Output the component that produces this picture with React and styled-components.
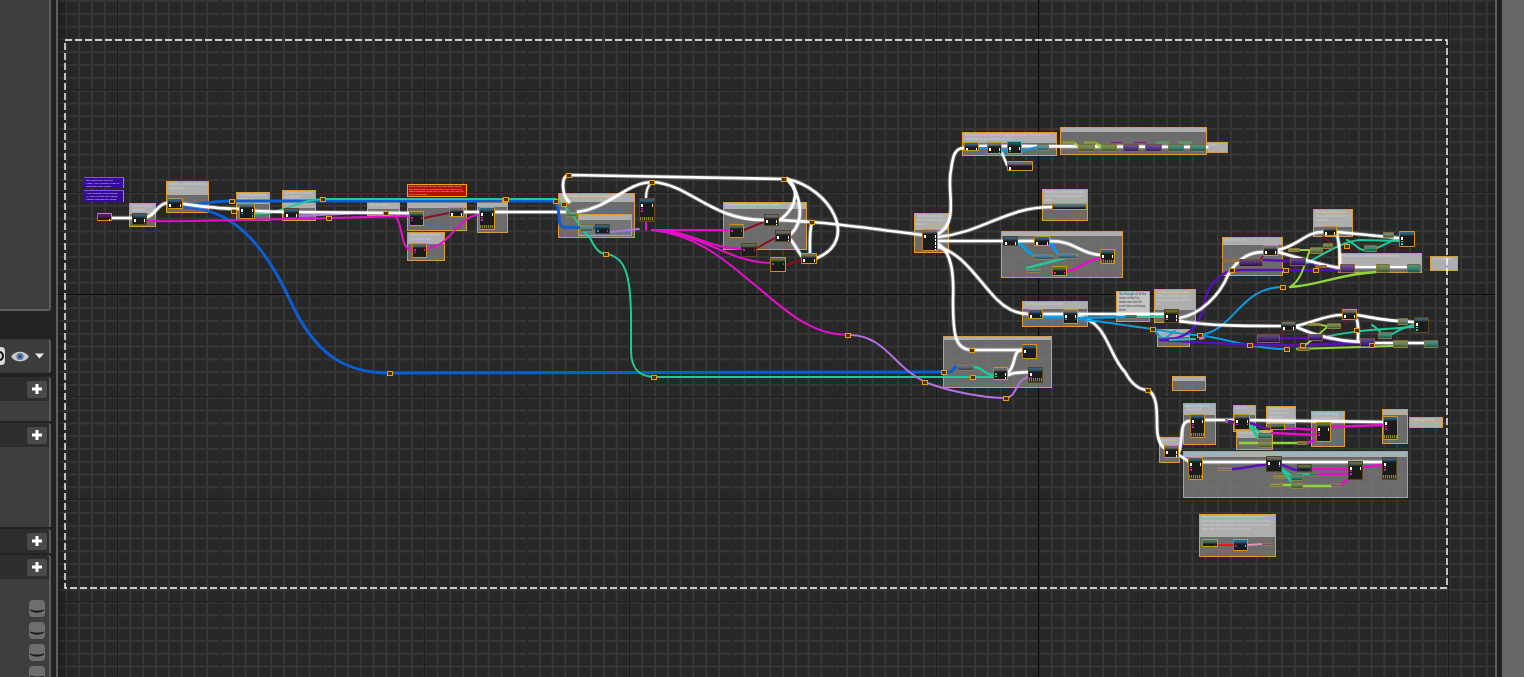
import React from "react";
import styled, { createGlobalStyle } from "styled-components";

const GlobalStyle = createGlobalStyle`
  html, body { margin: 0; padding: 0; height: 100%; overflow: hidden; background: #222; }
  #root { height: 100%; }
`;

const WHITE = "#ffffff";
const BLUE = "#0b5fd2";
const CYAN = "#0a9ce2";
const TEAL = "#1fc99a";
const GREEN = "#8fd63a";
const MAGENTA = "#e40fc8";
const PURPLE = "#5a10b8";
const LILAC = "#b272e0";
const RED = "#8a1020";

const HEADS = {
  blue: "#2f607f",
  green: "#56704e",
  gray: "#6b6b6b",
  purple: "#4c1a70",
  teal: "#10595e",
  yellow: "#6a6a1c",
};

// page coordinates: x1, y1, x2, y2, bottom of the header, text
const comments = [
  [129, 203, 156, 227, 213, "Draw the thing and hand back"],
  [166, 181, 209, 213, 194, "Find the current state of the output and keep it so that it can be read by other parts of the graph below"],
  [236, 192, 270, 221, 203, "Setup the values we need to use in the song"],
  [282, 190, 316, 221, 207, "Set the first value of the key here"],
  [367, 202, 400, 216, 208, "Get the name"],
  [407, 202, 467, 231, 207, "Loop through the notes and set"],
  [407, 232, 445, 261, 243, "Work out the note and get what is next in it"],
  [477, 202, 508, 233, 206, "Make the thing"],
  [558, 193, 635, 238, 201, "Loop through every part of the song and set values"],
  [578, 214, 632, 236, 219, "Get the part of the song"],
  [723, 202, 807, 250, 208, "Check each of the parts for what it holds"],
  [962, 132, 1057, 156, 142, "Set up the pattern with each thing that it needs. This runs at the start of the song each time, for each of the parts in it"],
  [1060, 127, 1207, 155, 131, "Make the strings"],
  [1207, 142, 1228, 153, 153, "Done"],
  [1042, 189, 1088, 221, 203, "Find the last thing and keep it so that it can be used by the parts below it in the graph"],
  [914, 213, 949, 253, 229, "Split into parts, one for each of the jobs it has to do here"],
  [1001, 231, 1123, 278, 235, "Work out the time for each part"],
  [1222, 237, 1283, 276, 244, "Set the first line"],
  [1313, 209, 1353, 237, 226, "Run the next line of the thing and check that it is valid here so that it works"],
  [1338, 253, 1422, 273, 264, "Print the line out and hand it to the next part"],
  [1430, 256, 1458, 271, 271, "Done with line"],
  [1022, 301, 1088, 327, 308, "Get the value out of the data"],
  [1154, 289, 1196, 323, 309, "Set the second line and hand it on so that every part can read the value of it"],
  [1157, 329, 1190, 347, 336, "Find the row and value"],
  [943, 336, 1052, 388, 339, "Check whether it is the last part and go on"],
  [1172, 376, 1206, 391, 380, "Notes"],
  [1183, 403, 1216, 445, 414, "Ahead of the rest, check all of the parts"],
  [1159, 437, 1180, 463, 445, "Branch it here"],
  [1233, 405, 1256, 432, 414, "Get the item"],
  [1236, 430, 1273, 450, 437, "Get the parts"],
  [1266, 406, 1296, 430, 423, "Build the list of items from the part above"],
  [1311, 411, 1345, 447, 422, "Check each thing that we have and hand them back here"],
  [1382, 409, 1408, 444, 414, "Set item"],
  [1409, 417, 1443, 428, 428, "Finish up the list"],
  [1183, 451, 1408, 498, 456, "Make the list of parts from the thing and set"],
  [1199, 514, 1276, 557, 536, "This part is not used while the song runs, but it is kept so that we are able to test each of the parts on their own. Run it from the editor to see what comes back and check the values in the log"],
];

const TEXT_NOTE = [1116, 291, 1150, 322, 315, "Go through all of the items in the list, make one line for each item and keep them in a row so that they can be looked up again later on when it comes to printing them out"];

const notes = [
  [84, 177, 124, 188, "Big output until have the [VEGA] key is made it easy to match for in the output"],
  [84, 190, 124, 202, "I also draw the socket things i.e. while see the way things outside and grab the things"],
];

const RED_NOTE = [407, 184, 467, 197, "This is to find where are are in the song string. Use the Blueprint to tracked each thing there is so easy to keep data generalized, so use here to find where are on so we don't repeat heads"];

const M = "#e40fc8";
const W = "#ffffff";
const C = "#19d3c0";
const B = "#11a0e8";

// full nodes: x1, y1, x2, y2, head, left pins, right pins, footer
const nodes = [
  [97, 213, 112, 221, "purple", [], [W]],
  [132, 213, 147, 225, "blue", [W], [W, M]],
  [167, 198, 183, 209, "blue", [W], [W, B]],
  [239, 203, 255, 219, "gray", [W, B], [W, B, C]],
  [284, 208, 299, 218, "blue", [W], [W, M]],
  [409, 211, 424, 226, "green", [M, M], [M]],
  [449, 207, 464, 217, "gray", [W], [W]],
  [412, 243, 427, 258, "green", [M, M], [M]],
  [479, 207, 495, 230, "blue", [W, M, M], [W], true],
  [595, 224, 610, 234, "blue", [B], [M]],
  [639, 198, 655, 222, "blue", [W, M, M], [W], true],
  [729, 224, 744, 238, "green", [M], [M]],
  [764, 214, 779, 226, "gray", [W], [W, W]],
  [775, 230, 791, 242, "gray", [W], [W, W]],
  [741, 243, 757, 257, "green", [M], [M]],
  [770, 257, 786, 272, "green", [M], [M]],
  [801, 253, 817, 264, "gray", [W], [W, W]],
  [964, 142, 979, 151, "blue", [W], [W, B]],
  [987, 142, 1002, 154, "gray", [W], [W, B]],
  [1007, 141, 1022, 154, "teal", [W, B], [W]],
  [1007, 161, 1033, 171, "gray", [W], []],
  [1052, 203, 1087, 210, "gray", [W], []],
  [922, 229, 938, 251, "gray", [W], [W, W, W, W, W]],
  [1003, 236, 1018, 246, "blue", [W], [W, B]],
  [1034, 236, 1050, 246, "blue", [W], [W, B]],
  [1100, 249, 1115, 264, "blue", [W, M], [W], true],
  [1052, 266, 1067, 276, "green", [M, M], [M]],
  [1028, 309, 1043, 319, "blue", [W], [B]],
  [1063, 309, 1078, 324, "gray", [W, B], [W, B]],
  [1164, 309, 1179, 323, "yellow", [W, C], [W, W]],
  [1022, 344, 1037, 359, "blue", [W], []],
  [993, 367, 1008, 380, "gray", [C, C], [W, W]],
  [1028, 367, 1043, 383, "blue", [W, M], [], true],
  [1263, 245, 1278, 256, "gray", [W], [W, W]],
  [1323, 226, 1337, 236, "gray", [W], [W, W]],
  [1399, 231, 1415, 247, "blue", [W, C, C], []],
  [1281, 321, 1296, 331, "gray", [W], [W, W]],
  [1342, 309, 1357, 320, "gray", [W], [W, W]],
  [1414, 317, 1429, 333, "blue", [W, C, C], []],
  [1190, 414, 1205, 438, "blue", [W, M, M], [W], true],
  [1164, 445, 1179, 458, "gray", [W], [W, W]],
  [1234, 414, 1250, 430, "gray", [W, M], [W, C]],
  [1270, 423, 1285, 430, "green", [], [M]],
  [1316, 422, 1331, 442, "green", [W, M, M], [W]],
  [1383, 416, 1398, 440, "blue", [W, M, M], [], true],
  [1188, 457, 1203, 480, "blue", [W, M, M], [W], true],
  [1266, 456, 1282, 472, "gray", [W, PURPLE], [W, C]],
  [1297, 464, 1312, 472, "green", [PURPLE], [M]],
  [1348, 461, 1363, 480, "green", [W, M, M], [W]],
  [1382, 457, 1397, 480, "blue", [W, M, M], [], true],
  [1202, 539, 1218, 547, "green", [], ["#e01010"]],
  [1233, 539, 1248, 551, "blue", ["#e01010"], ["#e090b0"]],
];

// small value nodes: x1, y1, x2, y2, tint
const pures = [
  [566, 211, 577, 217, "#3f8f78"],
  [580, 224, 593, 232, "#4a7a80"],
  [1037, 144, 1049, 151, "#3f7f90"],
  [1078, 144, 1095, 152, "#5f7a40"],
  [1101, 144, 1117, 152, "#5f7a40"],
  [1123, 144, 1139, 152, "#4a2a80"],
  [1145, 144, 1162, 152, "#4a2a80"],
  [1168, 144, 1184, 152, "#2a7a68"],
  [1190, 144, 1206, 152, "#2a7a68"],
  [1062, 141, 1075, 144, "#70a030"],
  [1084, 141, 1097, 144, "#70a030"],
  [1110, 141, 1123, 144, "#5a10b8"],
  [1133, 141, 1147, 144, "#5a10b8"],
  [1156, 141, 1169, 144, "#1fa080"],
  [1178, 141, 1192, 144, "#1fa080"],
  [1034, 253, 1053, 260, "#3f6f90"],
  [1058, 252, 1077, 259, "#3f6f90"],
  [1027, 268, 1041, 273, "#3f8f78"],
  [957, 363, 974, 371, "#55606a"],
  [1125, 315, 1137, 319, "#1a6a78"],
  [1239, 259, 1263, 267, "#3a1a5e"],
  [1222, 259, 1239, 262, "#8a5a3a"],
  [1383, 232, 1394, 238, "#5a7a60"],
  [1364, 245, 1377, 252, "#2a7a68"],
  [1310, 247, 1323, 254, "#5f7a40"],
  [1323, 243, 1333, 249, "#5f7a40"],
  [1288, 248, 1300, 252, "#7a9030"],
  [1290, 258, 1306, 266, "#3a1a7e"],
  [1315, 265, 1327, 268, "#7a5a30"],
  [1340, 264, 1355, 273, "#4a2a80"],
  [1376, 264, 1390, 273, "#5f7a40"],
  [1407, 264, 1420, 273, "#2a7a68"],
  [1398, 318, 1408, 325, "#5a7a60"],
  [1378, 332, 1392, 339, "#2a7a68"],
  [1360, 338, 1375, 347, "#3a1a7e"],
  [1393, 340, 1408, 348, "#5f7a40"],
  [1424, 340, 1438, 348, "#2a7a68"],
  [1257, 334, 1280, 343, "#3a1a5e"],
  [1308, 334, 1323, 341, "#3a1a7e"],
  [1327, 323, 1341, 329, "#5f7a40"],
  [1308, 323, 1321, 326, "#7a9030"],
  [1297, 347, 1310, 351, "#7a6a30"],
  [1258, 433, 1272, 439, "#2a7a68"],
  [1258, 441, 1272, 448, "#5f7a40"],
  [1291, 474, 1303, 481, "#2a7a68"],
  [1291, 482, 1303, 489, "#5f7a40"],
  [1309, 472, 1318, 476, "#2a7a68"],
  [1331, 483, 1341, 487, "#7a5a80"],
  [1218, 467, 1232, 471, "#8a6a90"],
  [1273, 475, 1286, 479, "#7a9030"],
  [1270, 483, 1283, 487, "#7a9030"],
  [1225, 419, 1228, 423, "#8a6a90"],
  [1297, 441, 1307, 445, "#7a6a30"],
  [1262, 542, 1272, 546, "#7a5a70"],
];

const reroutes = [
  [232, 201], [234, 211], [323, 199], [329, 218], [386, 213], [505, 200], [506, 199],
  [556, 201], [569, 175], [564, 204], [652, 182], [784, 179], [812, 222], [606, 254],
  [654, 377], [848, 335], [390, 373], [925, 382], [972, 350], [973, 377], [1006, 398],
  [1148, 390], [944, 372], [1153, 329], [1200, 335], [1250, 345], [1303, 345], [1232, 270],
  [1286, 270], [1316, 270], [1357, 330], [1372, 345], [1283, 287], [1287, 349], [1347, 246],
];

const wires = [
  // left half, long lines first
  [BLUE, 3, "M183 207 C230 208 262 240 290 300 C315 355 345 373 390 373 L945 372"],
  [BLUE, 3, "M183 206 C200 204 215 201 232 201 L556 201"],
  [TEAL, 2, "M255 214 C285 214 295 200 323 199 L556 199"],
  [MAGENTA, 2, "M147 221 C200 222 280 219 330 218 L409 216"],
  [LILAC, 2, "M299 216 C330 215 350 213 367 213 L409 214"],
  [MAGENTA, 2, "M390 213 C405 216 398 250 412 250"],
  [MAGENTA, 2, "M427 248 C450 248 458 215 479 215"],
  [RED, 2, "M424 218 L449 213"],
  [WHITE, 3, "M112 218 L132 218"],
  [WHITE, 3, "M147 217 C155 216 158 203 167 203"],
  [WHITE, 3, "M183 204 C200 206 220 209 239 209"],
  [WHITE, 3, "M255 211 L284 212 L409 213"],
  [WHITE, 3, "M464 212 L479 212"],
  [WHITE, 3, "M495 212 L566 212"],
  // middle
  [BLUE, 3, "M555 202 C562 210 556 225 563 227 L595 228"],
  [TEAL, 2, "M558 200 C575 215 582 230 590 238 C596 250 600 254 606 254 C625 256 631 275 631 320 L631 350 C631 370 640 377 655 377 L993 377"],
  [LILAC, 2, "M610 232 L639 229"],
  [MAGENTA, 2, "M646 222 L646 230"],
  [MAGENTA, 2, "M652 230 L729 230"],
  [MAGENTA, 2, "M652 230 C690 230 710 249 741 249"],
  [MAGENTA, 2, "M652 230 C700 232 730 263 770 263"],
  [MAGENTA, 2, "M652 230 C700 235 730 265 755 285 C785 310 810 335 848 335"],
  [LILAC, 2, "M851 335 C885 336 895 368 925 382 C950 392 985 398 1006 398 C1018 396 1015 380 1028 377"],
  [RED, 2, "M744 230 L764 222"],
  [RED, 2, "M757 248 L775 238"],
  [RED, 2, "M786 265 L801 260"],
  [WHITE, 3, "M569 202 C562 195 560 176 569 175 L784 179"],
  [WHITE, 3, "M787 179 C798 185 800 205 780 220"],
  [WHITE, 3, "M787 179 C802 195 805 222 790 235"],
  [WHITE, 3, "M787 179 C830 188 860 240 817 258"],
  [WHITE, 3, "M577 212 C610 208 625 183 652 182 C690 184 710 220 764 220"],
  [WHITE, 2.5, "M652 182 C647 186 646 192 646 198"],
  [WHITE, 3, "M779 220 L812 222 C830 223 860 227 922 235"],
  [WHITE, 3, "M812 222 C809 232 810 248 810 254"],
  [WHITE, 3, "M791 240 C796 246 798 252 803 258"],
  // fan out of the sequence node
  [WHITE, 3, "M938 234 C960 222 946 190 951 170 C953 155 955 148 964 148"],
  [WHITE, 3, "M938 237 C985 232 1005 207 1052 207"],
  [WHITE, 3, "M938 241 L1003 241"],
  [WHITE, 3, "M938 244 C952 252 954 275 953 300 C953 335 955 350 972 350 L1022 350"],
  [WHITE, 3, "M938 247 C960 252 975 275 990 292 C1003 308 1015 314 1028 314"],
  // top row
  [WHITE, 3, "M979 146 L1207 147"],
  [CYAN, 2, "M979 148 L987 148"],
  [CYAN, 2, "M1002 150 L1007 150"],
  [CYAN, 2, "M1022 151 L1037 147"],
  [GREEN, 2.5, "M1073 142 L1082 149"],
  [GREEN, 2.5, "M1095 142 L1103 149"],
  [WHITE, 2.5, "M1002 153 L1007 165"],
  // time group
  [CYAN, 3, "M1018 243 C1024 247 1030 255 1036 256"],
  [CYAN, 3, "M1050 243 C1055 246 1056 255 1060 256"],
  [WHITE, 3, "M1018 241 L1034 241"],
  [WHITE, 3, "M1050 241 C1075 241 1080 254 1100 255"],
  [TEAL, 2.5, "M1027 268 L1077 255"],
  [MAGENTA, 2.5, "M1067 271 C1080 270 1085 260 1100 258"],
  // blue + white from the get node
  [CYAN, 3.5, "M1043 317 L1063 317"],
  [WHITE, 3, "M1043 314 L1164 314"],
  [WHITE, 3, "M1078 316 C1108 322 1108 355 1125 372 C1132 385 1140 390 1148 390 C1157 395 1157 410 1157 425 C1157 438 1160 445 1164 448"],
  [TEAL, 2, "M1137 317 L1164 317"],
  [CYAN, 2.5, "M1078 318 L1125 317"],
  [CYAN, 2, "M1078 319 C1105 322 1130 326 1153 329 C1170 332 1185 335 1200 335 C1235 330 1240 287 1283 287"],
  [CYAN, 2, "M1153 329 L1163 340 L1175 331"],
  [CYAN, 2, "M1200 335 C1230 340 1255 349 1287 349"],
  [PURPLE, 2.5, "M1160 340 C1190 340 1198 325 1203 310 C1206 285 1220 270 1240 270 L1340 270"],
  [PURPLE, 2.5, "M1160 340 C1200 342 1240 346 1303 345 L1360 343"],
  [PURPLE, 2.5, "M1263 260 L1290 261"],
  [PURPLE, 2.5, "M1306 262 C1320 264 1330 267 1340 267"],
  [PURPLE, 2.5, "M1280 338 L1308 338"],
  [PURPLE, 2.5, "M1323 338 C1335 341 1345 342 1360 342"],
  [GREEN, 2.5, "M1290 287 C1320 285 1340 274 1376 272"],
  [GREEN, 2, "M1290 287 C1302 280 1305 262 1310 250"],
  [GREEN, 2, "M1297 349 L1393 346"],
  [GREEN, 2, "M1297 349 C1310 345 1322 330 1330 325"],
  [GREEN, 2, "M1300 250 L1310 250"],
  [GREEN, 2, "M1321 325 L1327 326"],
  [TEAL, 2, "M1307 263 C1330 250 1345 241 1360 240 L1399 241"],
  [TEAL, 2, "M1347 240 C1355 243 1358 250 1364 250"],
  [TEAL, 2, "M1377 248 C1385 245 1390 241 1399 238"],
  [TEAL, 2, "M1320 338 C1345 332 1365 330 1414 327"],
  [TEAL, 2, "M1372 325 C1378 328 1380 333 1384 335"],
  [TEAL, 2, "M1392 334 C1400 330 1405 326 1414 325"],
  [RED, 1.5, "M1323 236 L1332 244"],
  [RED, 1.5, "M1263 256 L1258 262"],
  [RED, 1.5, "M1284 331 L1278 336"],
  [RED, 1.5, "M1347 320 L1346 324"],
  [WHITE, 3, "M1179 318 C1200 315 1220 295 1228 275 C1238 258 1250 252 1263 252"],
  [WHITE, 3, "M1278 250 C1300 245 1305 232 1323 232"],
  [WHITE, 3, "M1337 232 L1399 238"],
  [WHITE, 3, "M1337 235 C1340 245 1340 255 1340 267"],
  [WHITE, 3, "M1278 252 C1300 258 1320 265 1340 268"],
  [WHITE, 3, "M1355 267 L1407 267"],
  [WHITE, 3, "M1179 321 C1210 326 1245 326 1281 326"],
  [WHITE, 3, "M1296 326 C1315 322 1325 315 1342 315"],
  [WHITE, 3, "M1357 315 C1375 318 1385 321 1414 322"],
  [WHITE, 3, "M1357 320 C1359 328 1358 333 1358 340"],
  [WHITE, 3, "M1296 327 C1320 338 1340 341 1360 342"],
  [WHITE, 3, "M1375 343 L1424 343"],
  [LILAC, 2, "M1200 339 L1204 338"],
  [TEAL, 2, "M1170 340 L1195 339"],
  // left lower groups
  [BLUE, 3, "M945 372 L950 372 C955 371 952 367 957 367"],
  [TEAL, 2.5, "M974 367 C982 367 985 375 993 375"],
  [WHITE, 3, "M1008 372 C1016 368 1012 350 1022 350"],
  [WHITE, 3, "M1008 375 L1014 373 L1028 372"],
  // bottom group
  [WHITE, 3, "M1179 452 C1184 440 1178 421 1190 421"],
  [WHITE, 3, "M1205 420 L1234 420 L1383 422"],
  [WHITE, 3, "M1179 455 L1188 461"],
  [WHITE, 3, "M1203 462 L1382 462"],
  [PURPLE, 2.5, "M1228 421 L1234 422"],
  [PURPLE, 2.5, "M1250 423 C1262 426 1262 429 1270 429"],
  [PURPLE, 2.5, "M1232 469 C1245 469 1250 465 1266 465"],
  [PURPLE, 2.5, "M1282 465 C1288 466 1290 470 1297 470"],
  [MAGENTA, 2.5, "M1285 428 L1316 430"],
  [MAGENTA, 2.5, "M1272 433 L1316 435"],
  [MAGENTA, 2.5, "M1331 427 L1383 425"],
  [MAGENTA, 2.5, "M1307 443 L1316 440"],
  [MAGENTA, 2.5, "M1312 469 L1348 469"],
  [MAGENTA, 2.5, "M1318 474 L1348 474"],
  [MAGENTA, 2.5, "M1341 485 L1348 479"],
  [MAGENTA, 2.5, "M1363 467 L1382 465"],
  [GREEN, 2.5, "M1240 443 L1258 443"],
  [GREEN, 2.5, "M1272 443 L1297 443"],
  [GREEN, 2.5, "M1283 485 L1291 485"],
  [GREEN, 2.5, "M1303 486 L1331 486"],
  [TEAL, 3, "M1250 426 L1258 438"],
  [TEAL, 2, "M1252 426 L1262 434"],
  [TEAL, 3, "M1281 468 L1291 481"],
  [TEAL, 2, "M1283 470 L1291 475 L1309 474"],
  ["#e81818", 2, "M1218 545 L1233 545"],
  ["#e090b0", 2, "M1248 545 L1262 544"],
];

// keep a note to what its box can hold at 3px, cut at a word
const fitText = (text, width, height) => {
  const lines = Math.floor(height / 4);
  const room = Math.floor((width - 4) / 1.7) * lines;
  if (text.length <= room) return text;
  return text.slice(0, room).replace(/\s+\S*$/, "");
};

const Page = styled.div`
  display: flex;
  width: 1524px;
  height: 677px;
  overflow: hidden;
  background: #222;
`;

const LeftColumn = styled.aside`
  display: flex;
  flex-direction: column;
  width: 51px;
  height: 677px;
  flex-shrink: 0;
`;

const TopPanel = styled.div`
  height: 309px;
  flex-shrink: 0;
  background: #3e3e3e;
  border-right: 2px solid #5c5c5c;
  border-bottom: 2px solid #5c5c5c;
  border-bottom-right-radius: 3px;
`;

const Toolbar = styled.div`
  display: flex;
  align-items: center;
  gap: 6px;
  height: 34px;
  margin-top: 28px;
  margin-bottom: 4px;
  flex-shrink: 0;
  background: #3c3c3c;
  border-right: 2px solid #5c5c5c;
  border-radius: 0 3px 3px 0;
`;

const ToggleStub = styled.div`
  width: 5px;
  height: 18px;
  background: #d8d8d8;
  border-radius: 0 4px 4px 0;
  position: relative;
  &::after {
    content: "";
    position: absolute;
    left: -5px;
    top: 4px;
    width: 5px;
    height: 6px;
    border: 2px solid #111;
    border-radius: 50%;
  }
`;

const Section = styled.section`
  flex-shrink: 0;
  border-right: 2px solid #5c5c5c;
  margin-bottom: 2px;
  background: #3e3e3e;
  border-top-right-radius: 3px;
`;

const SectionHead = styled.div`
  display: flex;
  align-items: center;
  justify-content: flex-end;
  height: ${(p) => p.$h}px;
  padding-right: 2px;
  background: #2d2d2d;
  border-top-right-radius: 3px;
`;

const SectionBody = styled.div`
  display: flex;
  flex-direction: column;
  align-items: flex-end;
  gap: 5px;
  height: ${(p) => p.$h}px;
  padding: ${(p) => (p.$list ? "21px 4px 0 0" : "0")};
  box-sizing: border-box;
  background: #3e3e3e;
`;

const AddButton = styled.div`
  display: flex;
  align-items: center;
  justify-content: center;
  width: 20px;
  height: 17px;
  color: #fff;
  background: #4a4a4a;
  border-radius: 2px;
`;

const ChevronButton = styled.div`
  display: flex;
  align-items: flex-end;
  justify-content: center;
  width: 16px;
  height: 17px;
  padding-bottom: 3px;
  box-sizing: border-box;
  flex-shrink: 0;
  background: #6e6e6e;
  border-radius: 4px;
`;

const CenterGap = styled.div`
  width: 5px;
  flex-shrink: 0;
  background: #222;
`;

const SideLine = styled.div`
  width: 2px;
  flex-shrink: 0;
  background: #5e5e5e;
`;

const RightPanel = styled.aside`
  flex: 1;
  background: #666;
`;

const Canvas = styled.main`
  position: relative;
  width: 1437px;
  height: 677px;
  flex-shrink: 0;
  overflow: hidden;
  background-color: #272727;
  background-image:
    linear-gradient(90deg, #1a1a1a 1px, transparent 1px),
    linear-gradient(#1a1a1a 1px, transparent 1px),
    linear-gradient(90deg, #373737 1.5px, transparent 1.5px),
    linear-gradient(#373737 1.5px, transparent 1.5px);
  background-size: 102.4px 100%, 100% 102.4px, 12.8px 100%, 100% 12.8px;
  background-position: 59px 0, 0 -13px, 7.4px 0, 0 12.9px;
`;

const MajorV = styled.div`
  position: absolute;
  left: 980px;
  top: 0;
  width: 1px;
  height: 100%;
  background: #080808;
`;

const MajorH = styled.div`
  position: absolute;
  left: 0;
  top: 294px;
  width: 100%;
  height: 1px;
  background: #080808;
`;

const Vignette = styled.div`
  position: absolute;
  inset: 0;
  background: linear-gradient(90deg, rgba(0, 0, 0, 0.25), rgba(0, 0, 0, 0) 16px, rgba(0, 0, 0, 0) 1420px, rgba(0, 0, 0, 0.15));
`;

const place = (p) => `
  left: ${p.$x1 - 58}px;
  top: ${p.$y1}px;
  width: ${p.$x2 - p.$x1}px;
  height: ${p.$y2 - p.$y1}px;
`;

const CommentBox = styled.div`
  position: absolute;
  ${place}
  display: flex;
  flex-direction: column;
  box-sizing: border-box;
  overflow: hidden;
  border: 1px solid #de9a3a;
  background: rgba(120, 120, 120, 0.85);
`;

const CommentHead = styled.div`
  height: ${(p) => p.$h}px;
  flex-shrink: 0;
  overflow: hidden;
  padding: 0 2px;
  box-sizing: border-box;
  background: ${(p) => (p.$dense ? "#c4c4c4" : "#aeaeae")};
  color: ${(p) => (p.$dense ? "#333" : "#d0d0d0")};
  font: 3px/4px "Liberation Sans", sans-serif;
`;

const NoteBox = styled.div`
  position: absolute;
  ${place}
  box-sizing: border-box;
  overflow: hidden;
  padding: 1px 2px;
  color: #e0dcf6;
  background: #340c98;
  border-top: 1px solid #8a50d8;
  border-right: 1px solid #a070e0;
  font: 2.5px/3.2px "Liberation Sans", sans-serif;
`;

const AlertBox = styled(NoteBox)`
  padding: 0 1px;
  color: #f4d8b8;
  background: #b01208;
  border: 1px solid #f0a010;
  line-height: 2.7px;
  font-size: 2.2px;
`;

const Node = styled.div`
  position: absolute;
  ${place}
  display: flex;
  flex-direction: column;
  box-sizing: border-box;
  overflow: hidden;
  background: #1a1c1c;
  border: 1px solid ${(p) => (p.$sel ? "#d8921a" : "#5c4420")};
  border-left-color: ${(p) => (p.$sel ? "#a8761e" : "#4a3a20")};
  border-radius: 1px;
`;

const NodeHead = styled.div`
  height: 4px;
  flex-shrink: 0;
  background: linear-gradient(${(p) => p.$c}, ${(p) => p.$c} 45%, #1f2222);
`;

const NodeBody = styled.div`
  display: flex;
  flex: 1;
  justify-content: space-between;
  padding: 1px 1px 0;
`;

const PinColumn = styled.div`
  display: flex;
  flex-direction: column;
  gap: 1px;
`;

const Pin = styled.i`
  display: block;
  width: 1.5px;
  height: ${(p) => (p.$exec ? 2.5 : 1.5)}px;
  background: ${(p) => p.$c};
`;

const NodeFoot = styled.div`
  height: 3px;
  flex-shrink: 0;
  background: repeating-linear-gradient(90deg, #8a8a28 0 1px, #2a2a20 1px 2px);
  border-bottom: 1px solid #3a3a18;
`;

const Pure = styled.div`
  position: absolute;
  ${place}
  box-sizing: border-box;
  background:
    linear-gradient(rgba(190, 190, 190, 0.3), rgba(190, 190, 190, 0.12) 50%, rgba(0, 0, 0, 0.3)),
    ${(p) => p.$c};
  border: 1px solid rgba(170, 120, 40, 0.55);
  border-radius: 1px;
`;

const Reroute = styled.div`
  position: absolute;
  left: ${(p) => p.$x - 58 - 3}px;
  top: ${(p) => p.$y - 2}px;
  width: 6px;
  height: 5px;
  box-sizing: border-box;
  background: #4a3418;
  border: 1px solid #e89c14;
`;

const Overlay = styled.svg`
  position: absolute;
  left: 0;
  top: 0;
  pointer-events: none;
`;

const Wire = styled.path`
  fill: none;
  stroke: ${(p) => p.$c};
  stroke-width: ${(p) => p.$w};
  stroke-linecap: round;
`;

const WireGlow = styled(Wire)`
  stroke-opacity: 0.28;
  stroke-width: ${(p) => p.$w + 1.5}px;
`;

const Marquee = styled.rect`
  fill: none;
  stroke: #fff;
  stroke-width: 1.4;
  stroke-dasharray: 7 3;
`;

function Plus() {
  return (
    <svg width="12" height="12" viewBox="0 0 12 12">
      <path d="M6 1v10M1 6h10" stroke="currentColor" strokeWidth="3" />
    </svg>
  );
}

function Chevron() {
  return (
    <svg width="14" height="5" viewBox="0 0 14 5">
      <path d="M0 1 C4 4 10 4 14 1 C10 2.4 4 2.4 0 1Z" fill="#141414" stroke="#141414" strokeWidth="0.7" />
    </svg>
  );
}

function Eye() {
  return (
    <svg width="18" height="11" viewBox="0 0 18 11">
      <path d="M0 5.5 C4 -1 14 -1 18 5.5 C14 12 4 12 0 5.5Z" fill="#c9c9c9" />
      <circle cx="9" cy="5.5" r="3.6" fill="#5b78ad" />
      <circle cx="9" cy="5.5" r="1.5" fill="#2d3f66" />
    </svg>
  );
}

function Caret() {
  return (
    <svg width="9" height="6" viewBox="0 0 9 6">
      <path d="M0 0.5h9L4.5 5.5Z" fill="#eee" />
    </svg>
  );
}

function Comment({ box, dense }) {
  const [x1, y1, x2, y2, head, text] = box;
  return (
    <CommentBox $x1={x1} $y1={y1} $x2={x2} $y2={y2}>
      <CommentHead $h={head - y1} $dense={dense}>{fitText(text, x2 - x1, head - y1 - 2)}</CommentHead>
    </CommentBox>
  );
}

function GraphNode({ data }) {
  const [x1, y1, x2, y2, head, left, right, foot] = data;
  const selected = (x1 * 7 + y1) % 3 !== 0;
  return (
    <Node $x1={x1} $y1={y1} $x2={x2} $y2={y2} $sel={selected}>
      <NodeHead $c={HEADS[head]} />
      <NodeBody>
        <PinColumn>
          {left.map((c, i) => <Pin key={i} $c={c} $exec={c === W && i === 0} />)}
        </PinColumn>
        <PinColumn>
          {right.map((c, i) => <Pin key={i} $c={c} $exec={c === W} />)}
        </PinColumn>
      </NodeBody>
      {foot && <NodeFoot />}
    </Node>
  );
}

export default function App() {
  return (
    <Page>
      <GlobalStyle />
      <LeftColumn>
        <TopPanel />
        <Toolbar>
          <ToggleStub />
          <Eye />
          <Caret />
        </Toolbar>
        <Section>
          <SectionHead $h={24}><AddButton><Plus /></AddButton></SectionHead>
          <SectionBody $h={20} />
        </Section>
        <Section>
          <SectionHead $h={24}><AddButton><Plus /></AddButton></SectionHead>
          <SectionBody $h={80} />
        </Section>
        <Section>
          <SectionHead $h={24}><AddButton><Plus /></AddButton></SectionHead>
        </Section>
        <Section>
          <SectionHead $h={24}><AddButton><Plus /></AddButton></SectionHead>
          <SectionBody $h={100} $list>
            <ChevronButton><Chevron /></ChevronButton>
            <ChevronButton><Chevron /></ChevronButton>
            <ChevronButton><Chevron /></ChevronButton>
            <ChevronButton><Chevron /></ChevronButton>
          </SectionBody>
        </Section>
      </LeftColumn>
      <CenterGap />
      <SideLine />
      <Canvas>
        <MajorV />
        <MajorH />
        <Vignette />
        {comments.map((box, i) => <Comment key={i} box={box} />)}
        <Comment box={TEXT_NOTE} dense />
        {notes.map(([x1, y1, x2, y2, text], i) => (
          <NoteBox key={i} $x1={x1} $y1={y1} $x2={x2} $y2={y2}>{text}</NoteBox>
        ))}
        <AlertBox $x1={RED_NOTE[0]} $y1={RED_NOTE[1]} $x2={RED_NOTE[2]} $y2={RED_NOTE[3]}>{RED_NOTE[4]}</AlertBox>
        <Overlay width="1437" height="677" viewBox="58 0 1437 677">
          {wires.map(([c, w, d], i) => (
            <g key={i}>
              {c === WHITE && <WireGlow $c={c} $w={w} d={d} />}
              <Wire $c={c} $w={c === WHITE ? w - 0.4 : w} d={d} />
            </g>
          ))}
        </Overlay>
        {nodes.map((data, i) => <GraphNode key={i} data={data} />)}
        {pures.map(([x1, y1, x2, y2, c], i) => (
          <Pure key={i} $x1={x1} $y1={y1} $x2={x2} $y2={y2} $c={c} />
        ))}
        {reroutes.map(([x, y], i) => <Reroute key={i} $x={x} $y={y} />)}
        <Overlay width="1437" height="677" viewBox="58 0 1437 677">
          <Marquee x="65" y="40" width="1382" height="548" />
        </Overlay>
      </Canvas>
      <SideLine />
      <CenterGap />
      <RightPanel />
    </Page>
  );
}
